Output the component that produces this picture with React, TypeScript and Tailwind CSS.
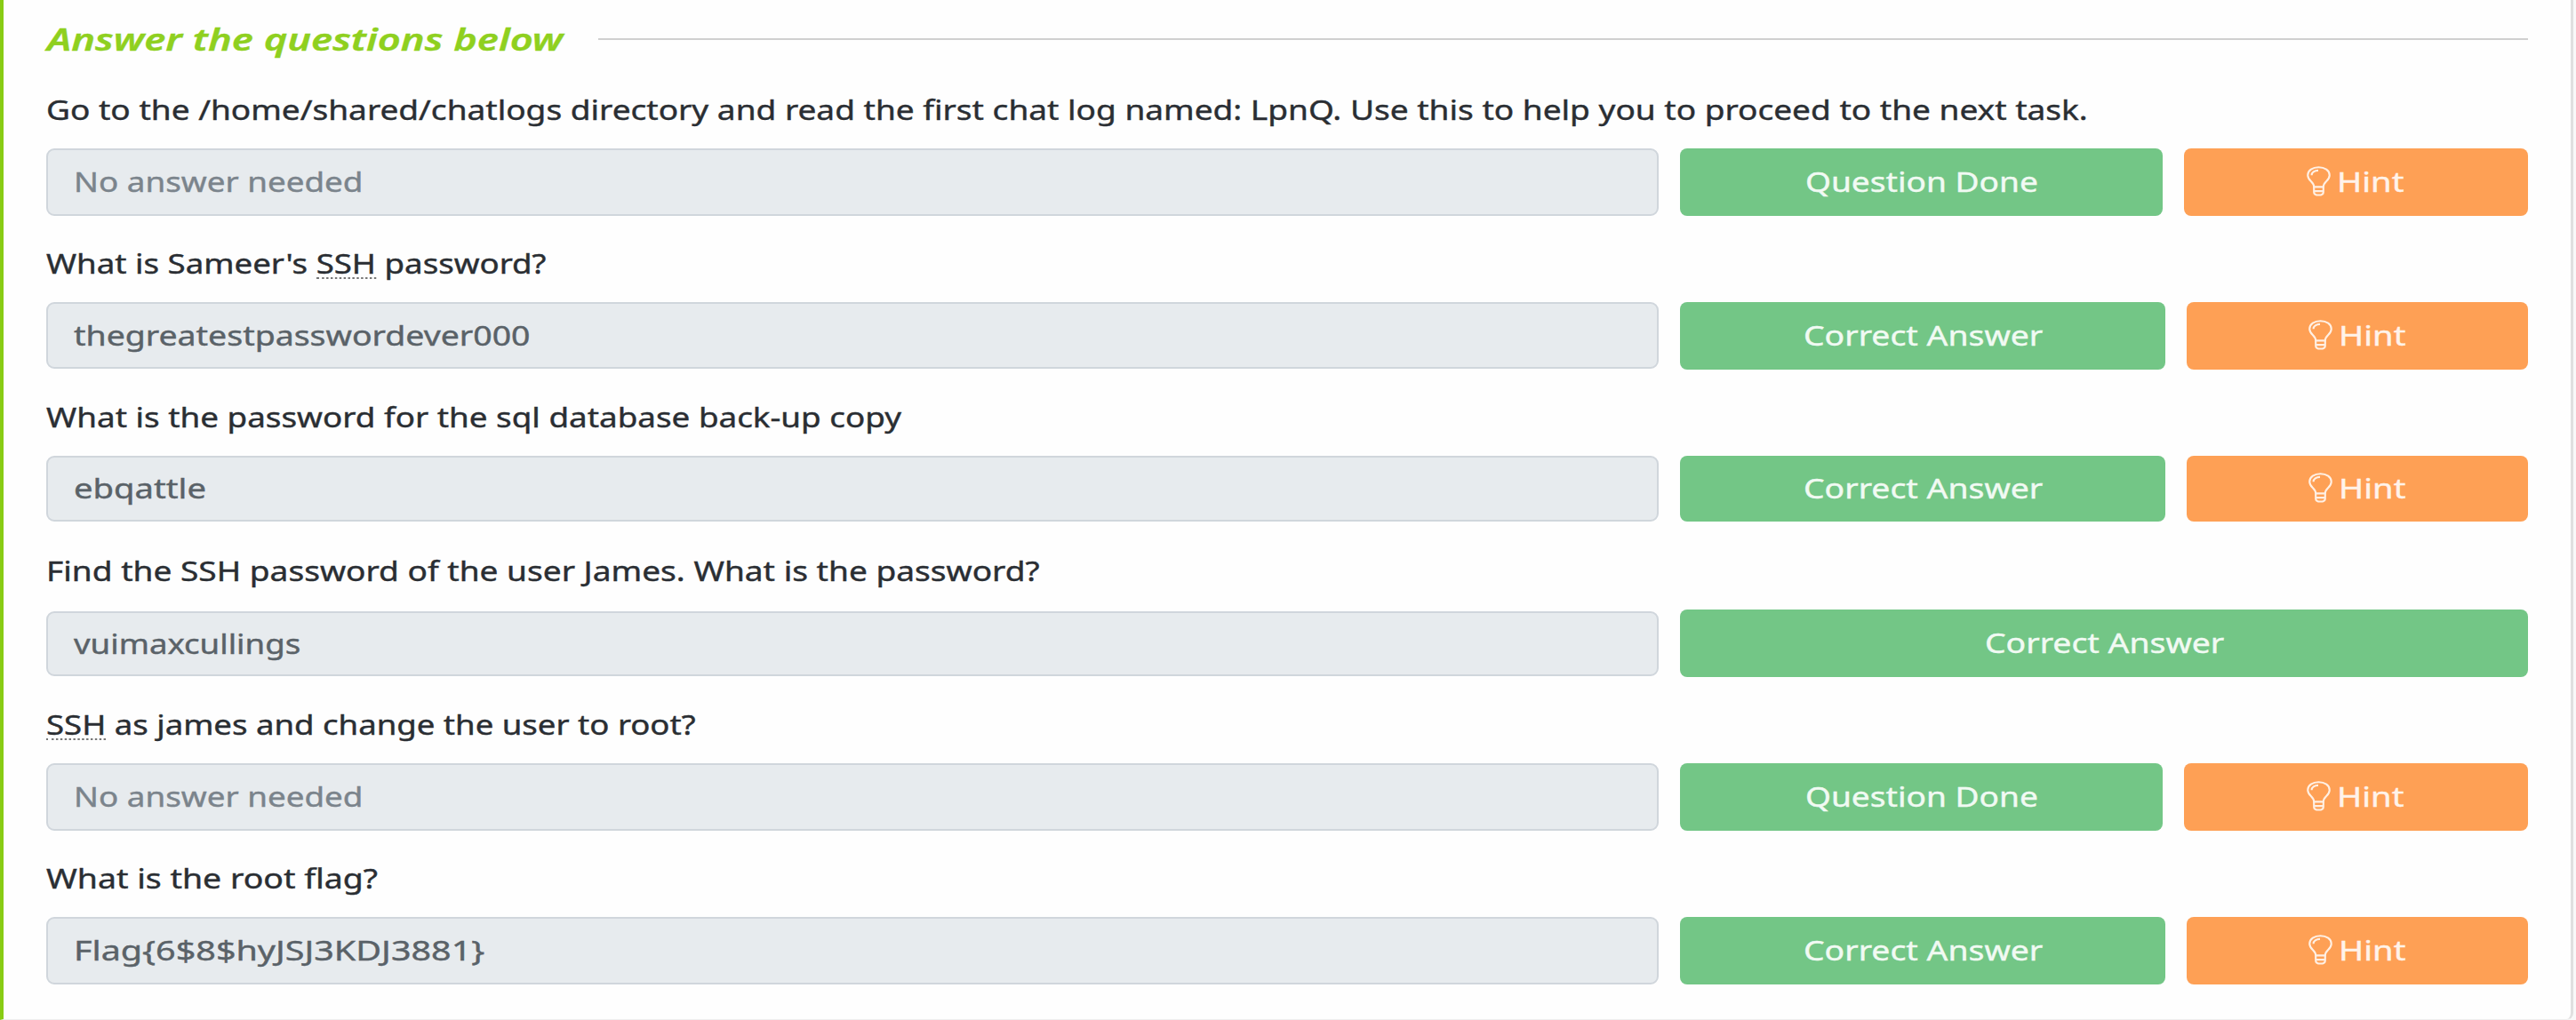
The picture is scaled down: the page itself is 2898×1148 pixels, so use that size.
import { useLayoutEffect, useRef, useState } from "react";
import type { ReactNode } from "react";

// Text drawn at a wide set: the glyphs are stretched to fill the given width.
function Wide({ w, className = "", children }: { w: number; className?: string; children: ReactNode }) {
  const ref = useRef<HTMLSpanElement>(null);
  const [s, setS] = useState(1);
  useLayoutEffect(() => {
    if (ref.current) setS(w / ref.current.offsetWidth);
  }, [w]);
  return (
    <span className="block shrink-0 text-left" style={{ width: w }}>
      <span ref={ref} className={`inline-block origin-left whitespace-nowrap ${className}`} style={{ transform: `scaleX(${s})` }}>
        {children}
      </span>
    </span>
  );
}

function Bulb() {
  return (
    <svg className="mb-[2px] h-[34px] w-[27px] shrink-0" viewBox="0 0 28 35" preserveAspectRatio="none" fill="none" stroke="#fff0e4" strokeWidth="2.2">
      <path d="M8.500 24C8.500 18 1.300 17 1.300 10.500C1.300 5 7 1.300 14 1.300S26.700 5 26.700 10.500C26.700 17 19.500 18 19.500 24Z" />
      <path d="M8.500 24V30Q8.500 33.500 14 33.500T19.500 30V24M8.500 29H19.500M5.800 10.500C5.800 7.500 9 5 13.500 5" />
    </svg>
  );
}

type Row = { q: ReactNode; qw: number; a: string; aw: number; none?: boolean; hint: boolean; ih: string; bh: string };
const abbr = "border-b-2 border-dotted border-[#777777] leading-[30px] inline-block";
const rows: Row[] = [
  { q: "Go to the /home/shared/chatlogs directory and read the first chat log named: LpnQ. Use this to help you to proceed to the next task.", qw: 2297, a: "No answer needed", aw: 325, none: true, hint: true, ih: "h-[76px]", bh: "h-[76px]" },
  { q: <>What is Sameer's <span className={abbr}>SSH</span> password?</>, qw: 563, a: "thegreatestpasswordever000", aw: 514, hint: true, ih: "h-[75px]", bh: "h-[76px]" },
  { q: "What is the password for the sql database back-up copy", qw: 962, a: "ebqattle", aw: 149, hint: true, ih: "h-[74px]", bh: "h-[74px]" },
  { q: "Find the SSH password of the user James. What is the password?", qw: 1117, a: "vuimaxcullings", aw: 255, hint: false, ih: "mt-[2px] h-[73px]", bh: "h-[76px]" },
  { q: <><span className={abbr}>SSH</span> as james and change the user to root?</>, qw: 731, a: "No answer needed", aw: 325, none: true, hint: true, ih: "h-[76px]", bh: "h-[76px]" },
  { q: "What is the root flag?", qw: 373, a: "Flag{6$8$hyJSJ3KDJ3881}", aw: 462, hint: true, ih: "h-[76px]", bh: "h-[76px]" },
];

export default function App() {
  return (
    <div className="h-[1148px] w-[2898px] overflow-hidden bg-[#f9f9f9] font-['Noto_Sans','Open_Sans',sans-serif] text-[30px] text-[#2a2e33] [-webkit-text-stroke:0.4px]">
      <main className="h-[1148px] w-[2895px] rounded-br-[8px] border-r-[3px] border-b border-l-4 border-[#e0e0e0] border-b-[#eeeeee] border-l-[#88cc14] bg-[#fefefe] pr-[48px] pl-[48px]">
        <header className="flex h-[89px] items-center gap-[40px] pl-px text-[34px] font-semibold text-[#8fd01f] italic">
          <Wide w={580}>Answer the questions below</Wide>
          <hr className="mb-[1px] h-[2px] flex-1 border-0 bg-[#d0d0d0]" />
        </header>
        {rows.map((r, i) => (
          <section key={i} className="flex h-[173.100px] flex-col">
            <div className="flex h-[78px] items-center pb-[9px]">
              <Wide w={r.qw}>{r.q}</Wide>
            </div>
            <div className="flex h-[76px] items-start">
              <div className={`mr-[24px] flex w-[1814px] shrink-0 items-center rounded-[9px] border-2 border-[#d0d6dc] bg-[#e7ebee] pb-px pl-[29px] ${r.ih} ${r.none ? "text-[#7b848c]" : "text-[#5a6268]"}`}>
                <Wide w={r.aw}>{r.a}</Wide>
              </div>
              <button className={`flex flex-1 items-center justify-center rounded-[8px] bg-[#73c686] pb-px text-[#f1faf3] ${r.bh}`}>
                <Wide w={r.none ? 262 : 269}>{r.none ? "Question Done" : "Correct Answer"}</Wide>
              </button>
              {r.hint && (
                <button className={`ml-[24px] flex shrink-0 items-center justify-center gap-[7px] rounded-[8px] bg-[#fea055] pr-[2px] pb-px text-[#fff3ea] ${r.bh} ${r.none ? "w-[387px]" : "w-[384px]"}`}>
                  <Bulb />
                  <Wide w={75}>Hint</Wide>
                </button>
              )}
            </div>
          </section>
        ))}
      </main>
    </div>
  );
}
